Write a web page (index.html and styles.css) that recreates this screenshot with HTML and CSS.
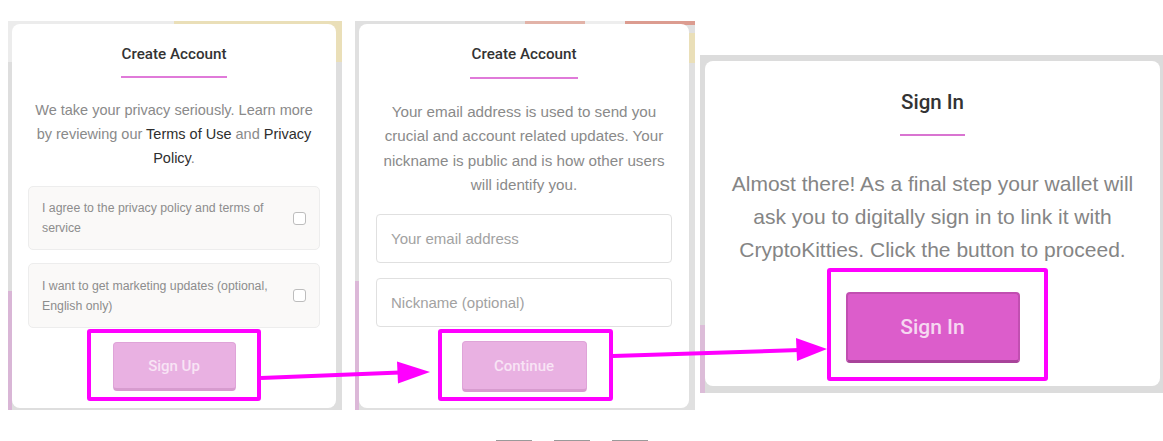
FILE: index.html
```html
<!DOCTYPE html>
<html>
<head>
<meta charset="utf-8">
<link rel="stylesheet" href="styles.css">
</head>
<body>
<div class="page">
  <div class="panels">
    <div class="backdrop bd1">
      <div class="card card1">
        <h2 class="title">Create Account</h2>
        <div class="rule"></div>
        <p class="lead">We take your privacy seriously. Learn more<br>by reviewing our <span class="dark">Terms of Use</span> and <span class="dark">Privacy</span><br><span class="dark">Policy</span>.</p>
        <label class="check">
          <span class="check-text">I agree to the privacy policy and terms of<br>service</span>
          <span class="box"></span>
        </label>
        <label class="check">
          <span class="check-text">I want to get marketing updates (optional,<br>English only)</span>
          <span class="box"></span>
        </label>
        <button class="btn btn-light btn1">Sign Up</button>
      </div>
    </div>
    <div class="backdrop bd2">
      <div class="card card2">
        <h2 class="title">Create Account</h2>
        <div class="rule"></div>
        <p class="lead lead2">Your email address is used to send you<br>crucial and account related updates. Your<br>nickname is public and is how other users<br>will identify you.</p>
        <div class="field">Your email address</div>
        <div class="field">Nickname (optional)</div>
        <button class="btn btn-light btn2">Continue</button>
      </div>
    </div>
    <div class="backdrop bd3">
      <div class="card card3">
        <h2 class="title title3">Sign In</h2>
        <div class="rule rule3"></div>
        <p class="lead lead3">Almost there! As a final step your wallet will<br>ask you to digitally sign in to link it with<br>CryptoKitties. Click the button to proceed.</p>
        <button class="btn btn-strong">Sign In</button>
      </div>
    </div>
  </div>
  <div class="pager">
    <span class="dash"></span><span class="dash"></span><span class="dash"></span>
  </div>
  <svg class="annot" width="1163" height="441" viewBox="0 0 1163 441">
    <g fill="none" stroke="#ff00ff" stroke-width="4">
      <rect x="89" y="331" width="170" height="68" rx="1"/>
      <rect x="440" y="331" width="171" height="68" rx="1"/>
      <rect x="829" y="270" width="217" height="109" rx="1"/>
      <line x1="261" y1="378" x2="400" y2="372.5"/>
      <line x1="613" y1="356" x2="800" y2="350"/>
    </g>
    <g fill="#ff00ff">
      <polygon points="397,361.5 430,372 398,383.5"/>
      <polygon points="796,338 827,349 797,361"/>
    </g>
  </svg>
</div>
</body>
</html>
```
FILE: styles.css
```css
* { box-sizing: border-box; }
html, body { margin: 0; padding: 0; background: #fff; }
body { width: 1163px; height: 441px; overflow: hidden; font-family: "Liberation Sans", Arial, sans-serif; }

.page { position: relative; width: 1163px; height: 441px; padding: 21px 0 0 8px; }
.panels { display: flex; align-items: flex-start; }

.backdrop { background: #e2e2e2; }
.bd1 {
  width: 334px; height: 389px; padding: 3px 6px 2px 4px;
  background:
    linear-gradient(#d9b6d6, #d9b6d6) left 270px / 4px 119px no-repeat,
    linear-gradient(90deg, #ececec 0 166px, #eadfb8 166px) top / 100% 41px no-repeat,
    #dedede;
}
.bd2 {
  width: 340px; height: 389px; margin-left: 13px; padding: 3px 6px 2px 4px;
  background:
    linear-gradient(#dcb8d8, #dcb8d8) left 260px / 4px 129px no-repeat,
    linear-gradient(90deg, transparent 0 170px, #e2b3a8 170px 230px, #eee 230px 270px, #dc9c90 270px) top / 100% 4px no-repeat,
    linear-gradient(#eadfb8, #eadfb8) right 12px / 6px 30px no-repeat,
    #e0e0e0;
}
.bd3 {
  width: 463px; height: 338px; margin-left: 5px; margin-top: 34px; padding: 6px 3px 7px 5px;
  background:
    linear-gradient(#dcbcd8, #dcbcd8) left 270px / 5px 68px no-repeat,
    #dcdcdc;
}

.card { background: #fff; border-radius: 8px; display: flex; flex-direction: column; align-items: center; }
.card1 { width: 324px; height: 384px; padding: 0 16px; }
.card2 { width: 330px; height: 384px; padding: 0 17px; }
.card3 { width: 455px; height: 325px; padding: 0 10px; }

.title {
  margin: 20px 0 0; font-family: Roboto, "Liberation Sans", sans-serif; font-weight: 500;
  font-size: 15.2px; line-height: 20px; color: #333;
}
.card2 .title { margin-top: 20px; }
.title3 { margin-top: 28px; font-size: 20.5px; line-height: 26px; }

.rule { width: 106px; height: 2px; background: #e07ad9; margin-top: 12px; }
.card2 .rule { width: 108px; margin-top: 13px; }
.rule3 { width: 65px; margin-top: 19px; background: #d974d1; }

.lead { margin: 20px 0 0; font-size: 14.5px; line-height: 24px; color: #8a8a8a; text-align: center; }
.lead2 { margin-top: 21px; font-size: 15.2px; line-height: 24.3px; }
.lead3 { margin-top: 31px; font-size: 21px; line-height: 33px; color: #858585; }
.dark { color: #2e2e2e; }

.check {
  align-self: stretch; display: flex; align-items: center; justify-content: space-between;
  margin-top: 13px; height: 65px; padding: 0 13px 0 13px;
  background: #faf9f8; border: 1px solid #ededed; border-radius: 5px;
}
.card1 .lead + .check { margin-top: 16px; height: 64px; }
.check-text { font-size: 12.3px; line-height: 20px; color: #8d8d8d; }
.box { width: 13px; height: 13px; border: 1.5px solid #bdbdbd; border-radius: 3px; background: #fff; flex: none; }

.field {
  align-self: stretch; height: 49px; margin-top: 15px; padding: 0 14px;
  display: flex; align-items: center;
  border: 1px solid #e0e0e0; border-radius: 4px;
  font-size: 15px; color: #a2a2a2;
}
.lead2 + .field { margin-top: 17px; }

.btn {
  font-family: Roboto, "Liberation Sans", sans-serif; font-weight: 500; border-radius: 4px;
  display: flex; align-items: center; justify-content: center; padding: 0;
}
.btn-light {
  width: 123px; height: 49px; margin-top: 14px; font-size: 15px;
  background: #e9b1e2; color: #f8e4f5; border: 1px solid #dfa4d8; border-bottom: 3px solid #d79ccf;
}
.btn2 { width: 125px; height: 51px; }
.btn-strong {
  width: 174px; height: 71px; margin-top: 26px; font-size: 21px;
  background: #dc5dcb; color: #f6d8f1; border: 2px solid #c14fb1; border-bottom: 3px solid #a8439a;
}

.pager { display: flex; gap: 22px; margin: 30px 0 0 488px; }
.dash { width: 36px; height: 1px; background: #9a9a9a; }

.annot { position: absolute; left: 0; top: 0; pointer-events: none; }
```
